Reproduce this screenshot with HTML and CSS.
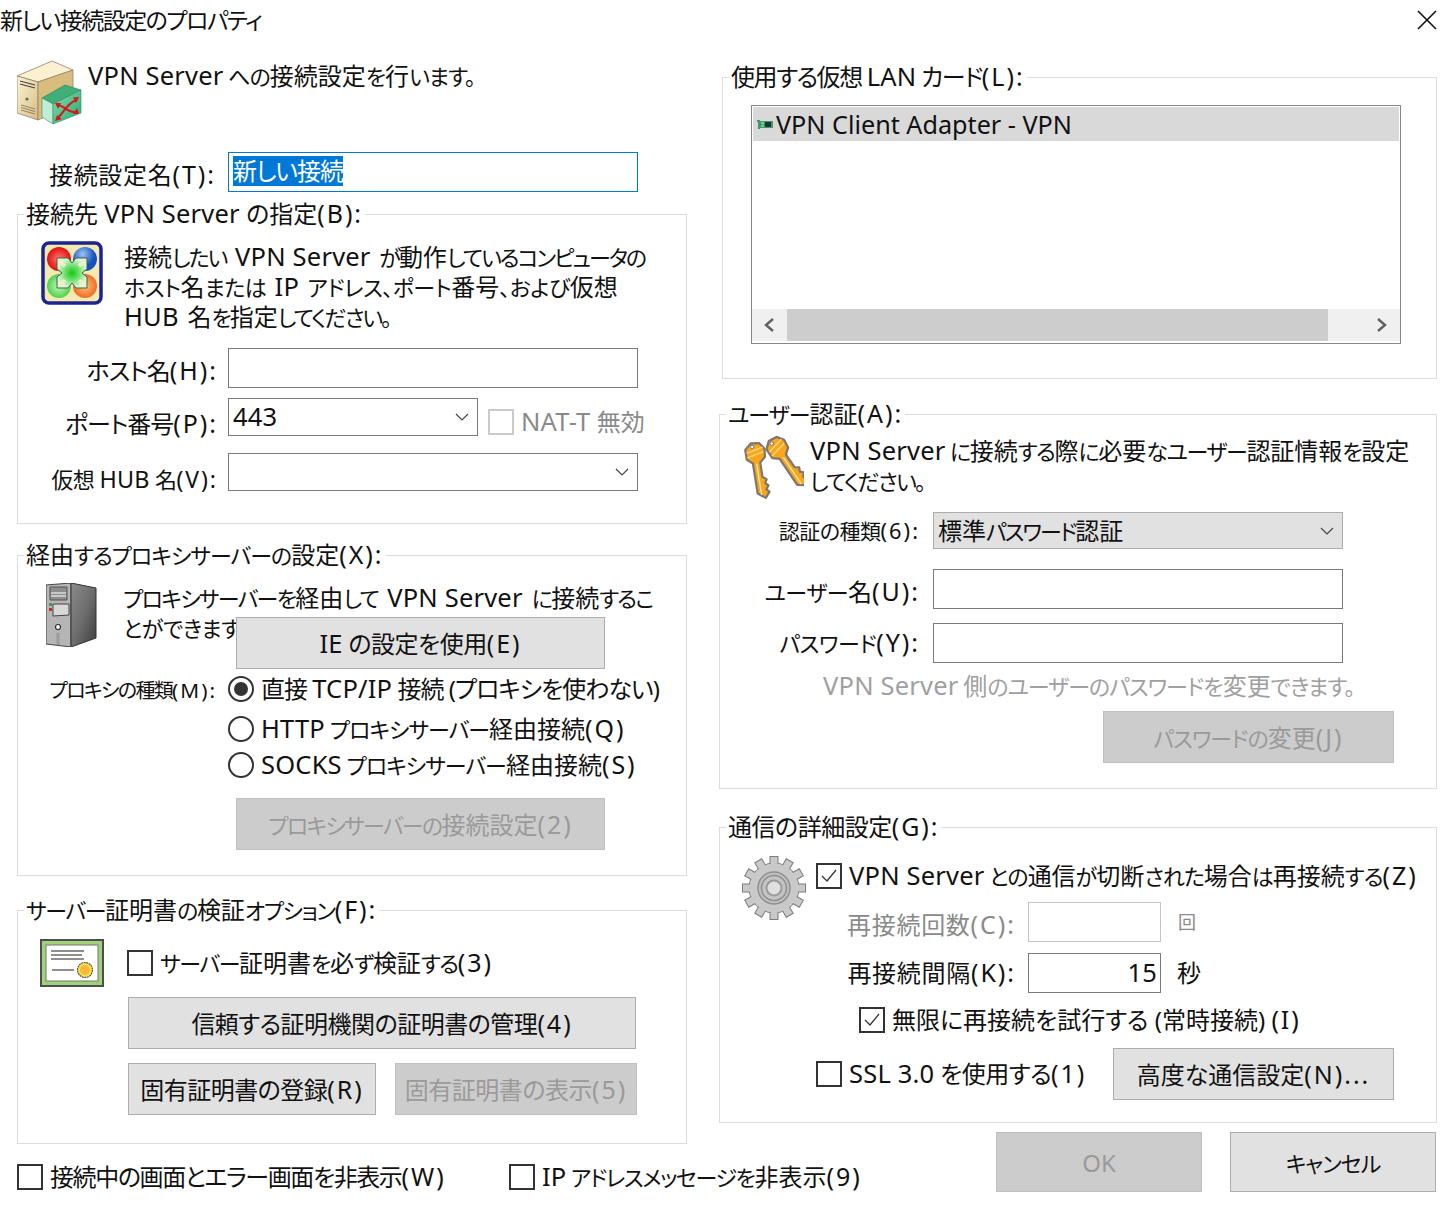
FILE: index.html
```html
<!DOCTYPE html>
<html lang="ja">
<head>
  <meta charset="UTF-8">
  <title>新しい接続設定のプロパティ</title>
  <link rel="stylesheet" href="styles.css">
</head>
<body>
  <div class="titlebar">
    <span class="title">新しい接続設定のプロパティ</span>
    <svg class="close" width="20" height="20" viewBox="0 0 20 20"><path d="M1 1L19 19M19 1L1 19" stroke="#111" stroke-width="1.6" fill="none"/></svg>
  </div>

  <div class="main">
    <div class="col-left">
      <div class="header">
        <svg class="icon-vpn" width="66" height="66" viewBox="0 0 66 66">
          <defs>
            <linearGradient id="beige" x1="0" y1="0" x2="1" y2="1"><stop offset="0" stop-color="#fdf3d4"/><stop offset="1" stop-color="#d8bd84"/></linearGradient>
            <linearGradient id="green" x1="0" y1="0" x2="1" y2="1"><stop offset="0" stop-color="#7fe0b0"/><stop offset="1" stop-color="#28a870"/></linearGradient>
          </defs>
          <path d="M35 1L0 16L21 22L56 10Z" fill="#fbf0cf" stroke="#8f8468" stroke-width=".8"/>
          <path d="M0 16L21 22V60L0 53Z" fill="url(#beige)" stroke="#8f8468" stroke-width=".8"/>
          <path d="M21 22L56 10V45L21 60Z" fill="#d9bd7e" stroke="#8f8468" stroke-width=".8"/>
          <path d="M3 21L18 25M3 24L18 28" stroke="#444" stroke-width="1.2"/>
          <circle cx="10" cy="39" r="1.6" fill="#3c7f5a"/>
          <path d="M4 45L18 49M4 47.500L18 51.500M4 50L18 54" stroke="#7b7157" stroke-width=".8"/>
          <path d="M48 25L25 38L36 44L64 30Z" fill="#3fae78" stroke="#2d7d57" stroke-width=".6"/>
          <path d="M25 38L36 44V64L25 57Z" fill="#bfeed6" stroke="#3a8a63" stroke-width=".6"/>
          <path d="M36 44L64 30V53L36 64Z" fill="url(#green)" stroke="#3a8a63" stroke-width=".6"/>
          <path d="M41 58C48 50 52 42 60 40M41 45C48 46 52 54 60 52" stroke="#d8141c" stroke-width="2" fill="none"/>
          <path d="M62 37L56 37.500L59 43ZM62 54L60 48L56 54ZM38 43L44 43L41 49ZM38 61L40 55L45 59Z" fill="#d8141c"/>
        </svg>
        <span class="header-text kn ls-10"><span class="en">VPN Server</span> への<span class="k">接続設定</span>を<span class="k">行</span>います。</span>
      </div>

      <div class="row name-row">
        <span class="lbl lbl-low ls-p1">接続設定名<span class="p">(T):</span></span>
        <div class="field field-wide field-focus"><span class="sel ls-10">新しい接続</span></div>
      </div>

      <fieldset class="group group-b">
        <legend>接続先 <span class="en">VPN Server</span> の指定<span class="p">(B):</span></legend>
        <div class="desc desc-b">
          <svg class="icon-compass" width="62" height="64" viewBox="0 0 62 64">
            <defs>
              <radialGradient id="r1"><stop offset="0" stop-color="#ff7a70"/><stop offset="1" stop-color="#e01010"/></radialGradient>
              <radialGradient id="r2" cx=".4" cy=".3"><stop offset="0" stop-color="#9cc4f6"/><stop offset="1" stop-color="#1450c0"/></radialGradient>
              <radialGradient id="r3"><stop offset="0" stop-color="#c4fbb8"/><stop offset="1" stop-color="#4ed04e"/></radialGradient>
              <radialGradient id="r4"><stop offset="0" stop-color="#ffc27c"/><stop offset="1" stop-color="#ee6d22"/></radialGradient>
              <radialGradient id="r5"><stop offset="0" stop-color="#10c810"/><stop offset="1" stop-color="#d8f8d8"/></radialGradient>
            </defs>
            <rect x="2" y="2" width="58" height="60" rx="6" fill="#f4e9b0" stroke="#1c2490" stroke-width="3.500"/>
            <circle cx="18" cy="18" r="12" fill="url(#r1)"/>
            <circle cx="44" cy="18" r="12" fill="url(#r2)"/>
            <circle cx="18" cy="45" r="12" fill="url(#r3)"/>
            <circle cx="44" cy="45" r="12" fill="url(#r4)"/>
            <path d="M16 17H27L31 22L35 17H46V28L41 32L46 36V47H35L31 42L27 47H16V36L21 32L16 28Z" fill="url(#r5)" stroke="#45604a" stroke-width="1"/>
            <path d="M18 19L24 25M44 19L38 25M18 45L24 39M44 45L38 39" stroke="#f3efc0" stroke-width="3.500"/>
          </svg>
          <div class="desc-text">
            <div class="kn ls-20 ws"><span class="k">接続</span>したい <span class="en">VPN Server</span> が<span class="k">動作</span>しているコンピュータの</div>
            <div class="kn ls-05 ws-s">ホスト<span class="k">名</span>または <span class="en">IP</span> アドレス、ポート<span class="k">番号</span>、および<span class="k">仮想</span></div>
            <div class="kn ls-20 ws"><span class="en">HUB</span> <span class="k">名</span>を<span class="k">指定</span>してください。</div>
          </div>
        </div>
        <div class="row host-row">
          <span class="lbl lbl-low ls-10">ホスト名<span class="p">(H):</span></span>
          <div class="field field-wide"></div>
        </div>
        <div class="row port-row">
          <span class="lbl lbl-lower ls-10">ポート番号<span class="p">(P):</span></span>
          <div class="field combo combo-port"><span class="en">443</span>
            <svg class="chev" width="14" height="8" viewBox="0 0 14 8"><path d="M1 1L7 7L13 1" stroke="#444" stroke-width="1.200" fill="none"/></svg>
          </div>
          <span class="check-label nat is-disabled"><span class="check"></span><span><span class="en">NAT-T</span> 無効</span></span>
        </div>
        <div class="row hub-row">
          <span class="lbl lbl-lower lbl-mid ls-05">仮想 <span class="en">HUB</span> 名<span class="p">(V):</span></span>
          <div class="field combo field-wide">
            <svg class="chev" width="14" height="8" viewBox="0 0 14 8"><path d="M1 1L7 7L13 1" stroke="#444" stroke-width="1.200" fill="none"/></svg>
          </div>
        </div>
      </fieldset>

      <fieldset class="group group-x">
        <legend class="kn ls-10"><span class="k">経由</span>するプロキシサーバーの<span class="k">設定</span><span class="p">(X):</span></legend>
        <div class="desc desc-x">
          <svg class="icon-tower" width="51" height="64" viewBox="0 0 51 64">
            <defs><linearGradient id="side" x1="0" y1="0" x2="1" y2="1"><stop offset="0" stop-color="#8a8a8a"/><stop offset=".5" stop-color="#6e6e6e"/><stop offset="1" stop-color="#3c3c3c"/></linearGradient></defs>
            <path d="M0 2L25 0V64L0 61Z" fill="#b5b5b5" stroke="#444" stroke-width="1"/>
            <path d="M25 0L50 5V55L25 64Z" fill="url(#side)" stroke="#333" stroke-width="1"/>
            <path d="M4 4H21V17H4Z" fill="#8d8d8d" stroke="#555"/>
            <path d="M5 10H20M5 13H20" stroke="#ddd" stroke-width="1.500"/>
            <path d="M7 21H23V32L7 33Z" fill="#d8d8d8" stroke="#444"/>
            <rect x="3" y="20" width="3" height="3" fill="#3f9a4a"/>
            <rect x="3" y="25" width="3" height="3" fill="#c03030"/>
            <circle cx="12" cy="44" r="2.500" fill="#fff" stroke="#333" stroke-width="1.200"/>
            <path d="M12 50V62" stroke="#999" stroke-width="3"/>
          </svg>
          <div class="desc-text">
            <div class="kn ls-17 ws">プロキシサーバーを<span class="k">経由</span>して <span class="en">VPN Server</span> に<span class="k">接続</span>するこ</div>
            <div class="desc-line2"><span class="desc-tail kn ls-05">とができます</span><div class="btn btn-ie ls-05"><span><span class="en">IE</span> の設定を使用<span class="p">(E)</span></span></div></div>
          </div>
        </div>
        <div class="row radio-row first">
          <span class="lbl lbl-small lbl-radio ls-17">プロキシの種類<span class="p">(M):</span></span>
          <span class="radio on"></span><span class="radio-text ls-10">直接 <span class="en">TCP/IP</span> 接続 (プロキシを使わない)</span>
        </div>
        <div class="row radio-row indent">
          <span class="radio"></span><span class="radio-text kn ls-10"><span class="en">HTTP</span> プロキシサーバー<span class="k">経由接続</span><span class="p">(Q)</span></span>
        </div>
        <div class="row radio-row third indent">
          <span class="radio"></span><span class="radio-text kn ls-10"><span class="en">SOCKS</span> プロキシサーバー<span class="k">経由接続</span><span class="p">(S)</span></span>
        </div>
        <div class="btn btn-off btn-proxy kn ls-17"><span>プロキシサーバーの<span class="k">接続設定</span><span class="p">(2)</span></span></div>
      </fieldset>

      <fieldset class="group group-f">
        <legend class="kn ls-14">サーバー<span class="k">証明書</span>の<span class="k">検証</span>オプション<span class="p">(F):</span></legend>
        <div class="cert-row">
          <svg class="icon-cert" width="64" height="48" viewBox="0 0 64 48">
            <rect x="1" y="1" width="62" height="46" fill="#9fd27a" stroke="#4e4e4e" stroke-width="2"/>
            <rect x="6" y="6" width="52" height="36" fill="#fff" stroke="#777"/>
            <path d="M11 12H44M11 16H42M11 20H44M12 31H34" stroke="#6a6a6a" stroke-width="1.300"/>
            <circle cx="45" cy="31" r="7.500" fill="#f7e34a" stroke="#555" stroke-width="1.200" stroke-dasharray="2 .6"/>
            <circle cx="45" cy="31" r="5" fill="#f9b73c"/>
          </svg>
          <span class="check-label cert-check"><span class="check"></span><span class="kn ls-14">サーバー<span class="k">証明書</span>を<span class="k">必</span>ず<span class="k">検証</span>する<span class="p">(3)</span></span></span>
        </div>
        <div class="btn btn-trust ls-05"><span>信頼する証明機関の証明書の管理<span class="p">(4)</span></span></div>
        <div class="btn-row">
          <div class="btn btn-reg ls-05"><span>固有証明書の登録<span class="p">(R)</span></span></div>
          <div class="btn btn-off btn-show ls-05"><span>固有証明書の表示<span class="p">(5)</span></span></div>
        </div>
      </fieldset>

      <div class="footer-checks">
        <span class="check-label hide-screen"><span class="check"></span><span class="ls-14">接続中の画面とエラー画面を非表示<span class="p">(W)</span></span></span>
        <span class="check-label"><span class="check"></span><span class="kn ls-14"><span class="en">IP</span> アドレスメッセージを<span class="k">非表示</span><span class="p">(9)</span></span></span>
      </div>
    </div>

    <div class="col-right">
      <fieldset class="group group-l">
        <legend class="ls-14">使用する仮想 <span class="en">LAN</span> カード<span class="p">(L):</span></legend>
        <div class="listbox">
          <div class="list-item">
            <svg width="17" height="12" viewBox="0 0 17 12">
              <path d="M0 2H3V3H16V10H3V11H1V4H0Z" fill="#3d9a68"/>
              <rect x="8" y="4" width="6" height="5" fill="#20333a"/>
              <path d="M4 5H7M4 8H7" stroke="#cfe8c8"/>
            </svg>
            <span>VPN Client Adapter - VPN</span>
          </div>
          <div class="list-space"></div>
          <div class="hscroll">
            <svg class="arrow" width="35" height="32" viewBox="0 0 35 32"><path d="M21 10L14 16L21 22" stroke="#606060" stroke-width="2.400" fill="none"/></svg>
            <div class="thumb"></div>
            <svg class="arrow" width="72" height="32" viewBox="0 0 72 32"><path d="M50 10L57 16L50 22" stroke="#606060" stroke-width="2.400" fill="none"/></svg>
          </div>
        </div>
      </fieldset>

      <fieldset class="group group-a">
        <legend class="kn ls-10">ユーザー<span class="k">認証</span><span class="p">(A):</span></legend>
        <div class="desc desc-a">
          <svg class="icon-keys" width="61" height="66" viewBox="0 0 61 66">
            <defs>
              <g id="key">
                <path d="M-10 -5L-3 -11L6 -10L11 -3L10 6L4 11V27L8 30L6 34L9 37L6 41L9 44L4 50L-4 44V11L-10 6Z" fill="#f9a61c" stroke="#7c7870" stroke-width="2.400" stroke-linejoin="round"/>
                <path d="M-9 -1L9 -5M-9 4L9 0" stroke="#ffd67a" stroke-width="1.600"/>
                <path d="M0 12V46" stroke="#ffe7a8" stroke-width="1.400"/>
                <circle cx="-2" cy="-7" r="1.800" fill="#fff" stroke="#777" stroke-width="1"/>
              </g>
            </defs>
            <use href="#key" transform="translate(12 19) rotate(-9) scale(.92)"/>
            <use href="#key" transform="translate(34 14) rotate(-34) scale(.95)"/>
          </svg>
          <div class="desc-text">
            <div class="kn ls-14"><span class="en">VPN Server</span> に<span class="k">接続</span>する<span class="k">際</span>に<span class="k">必要</span>なユーザー<span class="k">認証情報</span>を<span class="k">設定</span></div>
            <div class="kn ls-17">してください。</div>
          </div>
        </div>
        <div class="row auth-row">
          <span class="lbl lbl-small lbl-auth ls-05">認証の種類<span class="p">(6):</span></span>
          <div class="field combo combo-auth field-right"><span class="kn ls-20"><span class="k">標準</span>パスワード<span class="k">認証</span></span>
            <svg class="chev" width="14" height="8" viewBox="0 0 14 8"><path d="M1 1L7 7L13 1" stroke="#444" stroke-width="1.200" fill="none"/></svg>
          </div>
        </div>
        <div class="row user-row">
          <span class="lbl lbl-auth lbl-low kn ls-05">ユーザー<span class="k">名</span><span class="p">(U):</span></span>
          <div class="field field-right"></div>
        </div>
        <div class="row pass-row">
          <span class="lbl lbl-auth kn ls-05">パスワード<span class="p">(Y):</span></span>
          <div class="field field-right"></div>
        </div>
        <p class="pass-note kn ls-10"><span class="en">VPN Server</span> <span class="k">側</span>のユーザーのパスワードを<span class="k">変更</span>できます。</p>
        <div class="btn btn-off btn-pass kn ls-10"><span>パスワードの<span class="k">変更</span><span class="p">(J)</span></span></div>
      </fieldset>

      <fieldset class="group group-g">
        <legend class="ls-05">通信の詳細設定<span class="p">(G):</span></legend>
        <div class="gear-wrap">
          <svg class="icon-gear" width="66" height="66" viewBox="0 0 66 66">
            <defs><rect id="tooth" x="29" y="1.500" width="8" height="9" fill="#c9c9c9" stroke="#7d7d7d"/></defs>
            <circle cx="33" cy="33" r="25" fill="#c9c9c9" stroke="#7d7d7d"/>
            <use href="#tooth"/>
            <use href="#tooth" transform="rotate(30 33 33)"/>
            <use href="#tooth" transform="rotate(60 33 33)"/>
            <use href="#tooth" transform="rotate(90 33 33)"/>
            <use href="#tooth" transform="rotate(120 33 33)"/>
            <use href="#tooth" transform="rotate(150 33 33)"/>
            <use href="#tooth" transform="rotate(180 33 33)"/>
            <use href="#tooth" transform="rotate(210 33 33)"/>
            <use href="#tooth" transform="rotate(240 33 33)"/>
            <use href="#tooth" transform="rotate(270 33 33)"/>
            <use href="#tooth" transform="rotate(300 33 33)"/>
            <use href="#tooth" transform="rotate(330 33 33)"/>
            <circle cx="33" cy="33" r="24.400" fill="#c9c9c9"/>
            <circle cx="33" cy="33" r="16" fill="#c0c0c0" stroke="#8f8f8f" stroke-width="1.500"/>
            <circle cx="33" cy="33" r="12.500" fill="#c4c4c4" stroke="#8f8f8f" stroke-width="1.500"/>
            <circle cx="33" cy="33" r="7.500" fill="#e0e0e0" stroke="#9a9a9a" stroke-width="2"/>
          </svg>
          <div class="gear-body">
            <span class="check-label check-reconnect"><span class="check"><svg width="22" height="22" viewBox="0 0 22 22"><path d="M4 11L9 16L18 5" stroke="#333" stroke-width="1.300" fill="none"/></svg></span><span class="kn ls-10"><span class="en">VPN Server</span> との<span class="k">通信</span>が<span class="k">切断</span>された<span class="k">場合</span>は<span class="k">再接続</span>する<span class="p">(Z)</span></span></span>
            <div class="row count-row">
              <span class="lbl lbl-g lbl-count is-disabled ls-p1">再接続回数<span class="p">(C):</span></span>
              <div class="field field-num field-off"></div>
              <span class="unit unit-small is-disabled">回</span>
            </div>
            <div class="row interval-row">
              <span class="lbl lbl-g ls-p1">再接続間隔<span class="p">(K):</span></span>
              <div class="field field-num"><span class="en">15</span></div>
              <span class="unit">秒</span>
            </div>
            <span class="check-label check-forever"><span class="check"><svg width="22" height="22" viewBox="0 0 22 22"><path d="M4 11L9 16L18 5" stroke="#333" stroke-width="1.300" fill="none"/></svg></span><span>無限に再接続を試行する (常時接続) <span class="p">(I)</span></span></span>
            <div class="row ssl-row">
              <span class="check-label ssl-check"><span class="check"></span><span class="ls-05"><span class="en">SSL 3.0</span> を使用する<span class="p">(1)</span></span></span>
              <div class="btn btn-adv"><span>高度な通信設定<span class="p">(N)...</span></span></div>
            </div>
          </div>
        </div>
      </fieldset>

      <div class="dialog-btns">
        <div class="btn btn-off btn-dialog">OK</div>
        <div class="btn btn-dialog kn ls-10">キャンセル</div>
      </div>
    </div>
  </div>
</body>
</html>
```

FILE: styles.css
```css
html, body { margin: 0; padding: 0; }
body {
  width: 1454px; height: 1211px; overflow: hidden; background: #fff; color: #111;
  font-family: "Noto Sans", "Noto Sans CJK JP", sans-serif;
  font-size: 24px; line-height: 30px; font-feature-settings: "palt";
}
p { margin: 0; }
svg { display: block; flex: none; }

/* latin words and accelerator suffixes run wider than the kana around them */
.en { font-size: 1.0625em; letter-spacing: .2px; word-spacing: 0; line-height: 1; }
.p { font-size: 1.04em; letter-spacing: 2px; line-height: 1; }
.k { letter-spacing: 0; }
/* kana-heavy strings: kana a bit smaller, kanji and latin kept at full size */
.kn { font-size: 22px; }
.kn .k { font-size: 24px; }
.kn .en { font-size: 25.5px; }
.kn .p { font-size: 25px; }
.ws { word-spacing: 5px; }
.ws-s { word-spacing: 3px; }
.ls-p1 { letter-spacing: .7px; }
.ls-05 { letter-spacing: -.5px; }
.ls-10 { letter-spacing: -1px; }
.ls-14 { letter-spacing: -1.4px; }
.ls-17 { letter-spacing: -1.7px; }
.ls-20 { letter-spacing: -2px; }

.titlebar { height: 40px; display: flex; align-items: center; justify-content: space-between; padding-right: 17px; white-space: nowrap; }
.title { font-size: 23px; letter-spacing: -1.5px; }
.close { margin-top: -1px; }

.main { display: flex; gap: 32px; padding: 20px 0 0 17px; white-space: nowrap; }
.col-left { width: 670px; flex: none; }
.col-right { width: 718px; flex: none; }

/* group boxes */
.group { box-sizing: border-box; margin: 0; padding: 0; min-width: 0; border: 1px solid #dcdcdc; }
.group legend { margin-left: 6px; padding: 0 2px; line-height: 32px; }
.group-b { height: 326px; margin-top: 6px; }
.group-x { height: 337px; margin-top: 15px; }
.group-f { height: 250px; margin-top: 18px; }
.group-l { height: 318px; margin: 1px 0 0 3px; }
.group-a { height: 391px; margin-top: 19px; }
.group-g { height: 312px; margin-top: 22px; }

.header { display: flex; height: 92px; align-items: flex-start; }
.header-text { margin-left: 5px; line-height: 32px; }

/* form rows */
.row { display: flex; align-items: center; }
.name-row { padding-left: 1px; }
.lbl { flex: none; width: 198px; margin-right: 12px; text-align: right; }
.group-b .lbl { width: 200px; margin-right: 10px; }
.group-x .lbl { width: 199px; margin-right: 11px; }
.lbl-low { padding-top: 6px; }
.lbl-lower { padding-top: 14px; }
.lbl-mid { font-size: 22px; }
.lbl-small { font-size: 21px; }
.lbl-radio { padding-top: 4px; font-size: 20px; }
.lbl-auth { width: 200px; margin-right: 13px; }
.lbl-g { width: 200px; margin-right: 12px; }
.lbl-count { padding-top: 5px; }

.field { box-sizing: border-box; height: 40px; border: 1px solid #7a7a7a; padding-left: 4px; background: #fff; display: flex; align-items: center; line-height: 30px; }
.field-wide { width: 410px; }
.field-right { width: 410px; }
.field-focus { border-color: #0078d7; }
.sel { background: #0078d7; color: #fff; line-height: 30px; margin-top: -2px; }
.combo { height: 38px; }
.combo .chev { margin-left: auto; margin-right: 8px; }
.combo-port { width: 250px; }
.combo-auth { background: #e1e1e1; border-color: #adadad; height: 37px; }
.field-num { width: 133px; justify-content: flex-end; padding: 0 3px 0 0; }
.field-off { border-color: #c4c4c4; }
.unit { margin-left: 16px; }
.unit-small { font-size: 18px; margin-left: 17px; }

.check { box-sizing: border-box; flex: none; width: 26px; height: 26px; border: 2px solid #333; background: #fff; display: flex; align-items: center; justify-content: center; }
.check-label { display: inline-flex; align-items: center; gap: 7px; }
.is-disabled { color: #8a8a8a; }
.is-disabled .check { border-color: #cacaca; }

.radio { box-sizing: border-box; flex: none; width: 26px; height: 26px; border: 2px solid #333; border-radius: 50%; margin-right: 7px; display: flex; align-items: center; justify-content: center; }
.radio.on::after { content: ""; width: 14px; height: 14px; border-radius: 50%; background: #333; }

/* buttons */
.btn { box-sizing: border-box; height: 52px; padding-top: 1px; border: 1px solid #adadad; background: #e1e1e1; display: flex; align-items: center; justify-content: center; }
.btn-off { background: #cccccc; border-color: #bfbfbf; color: #9a9a9a; }

/* group B */
.desc { display: flex; }
.desc-b { box-sizing: border-box; height: 118px; padding: 11px 0 0 23px; }
.desc-b .desc-text { margin: 1px 0 0 21px; }
.port-row { margin-top: 10px; height: 38px; }
.hub-row { margin-top: 17px; height: 38px; }
.nat { margin-left: 10px; padding-top: 10px; }

/* group X */
.desc-x { padding: 12px 0 0 28px; }
.desc-x .desc-text { margin-left: 26px; }
.desc-line2 { display: flex; align-items: flex-start; }
.desc-tail { width: 113px; flex: none; }
.btn-ie { width: 369px; margin-top: 4px; }
.radio-row { height: 40px; }
.radio-row.third { height: 32px; }
.radio-row.indent { padding-left: 210px; }
.btn-proxy { width: 369px; margin: 17px 0 0 218px; }

/* group F */
.cert-row { display: flex; align-items: flex-start; height: 48px; margin-top: 13px; padding-left: 22px; }
.cert-check { margin: 9px 0 0 23px; }
.btn-trust { width: 508px; margin: 10px 0 0 110px; }
.btn-row { display: flex; gap: 19px; margin: 14px 0 0 110px; }
.btn-reg { width: 248px; }
.btn-show { width: 242px; }

.footer-checks { display: flex; margin: 18px 0 0 0; }
.hide-screen { width: 492px; flex: none; }

/* group L */
.listbox { box-sizing: border-box; display: flex; flex-direction: column; width: 650px; height: 239px; margin: 12px 0 0 28px; border: 1px solid #828790; }
.list-item { display: flex; align-items: center; gap: 2px; height: 34px; margin: 1px 1px 0; padding-left: 4px; background: #d9d9d9; font-size: 25.2px; }
.list-space { flex: 1; }
.hscroll { display: flex; height: 32px; margin-bottom: 2px; background: #f0f0f0; }
.thumb { flex: 1; background: #cdcdcd; }

/* group A */
.desc-a { height: 82px; box-sizing: border-box; padding: 4px 0 0 23px; }
.desc-a .desc-text { margin: 2px 0 0 6px; }
.user-row { margin-top: 20px; }
.pass-row { margin-top: 14px; }
.pass-note { margin: 8px 0 0 103px; color: #a0a0a0; }
.btn-pass { width: 291px; margin: 10px 0 0 383px; }

/* group G */
.gear-wrap { display: flex; align-items: flex-start; padding: 12px 0 0 21px; }
.gear-body { margin-left: 9px; display: flex; flex-direction: column; align-items: flex-start; }
.check-reconnect { margin-top: 6px; }
.count-row { margin-top: 11px; }
.interval-row { margin-top: 11px; }
.check-forever { margin: 12px 0 0 43px; }
.ssl-row { margin-top: 13px; }
.ssl-check { width: 297px; flex: none; }
.btn-adv { width: 281px; }

.dialog-btns { display: flex; gap: 28px; margin: 9px 0 0 277px; }
.btn-dialog { width: 206px; height: 60px; }
```
